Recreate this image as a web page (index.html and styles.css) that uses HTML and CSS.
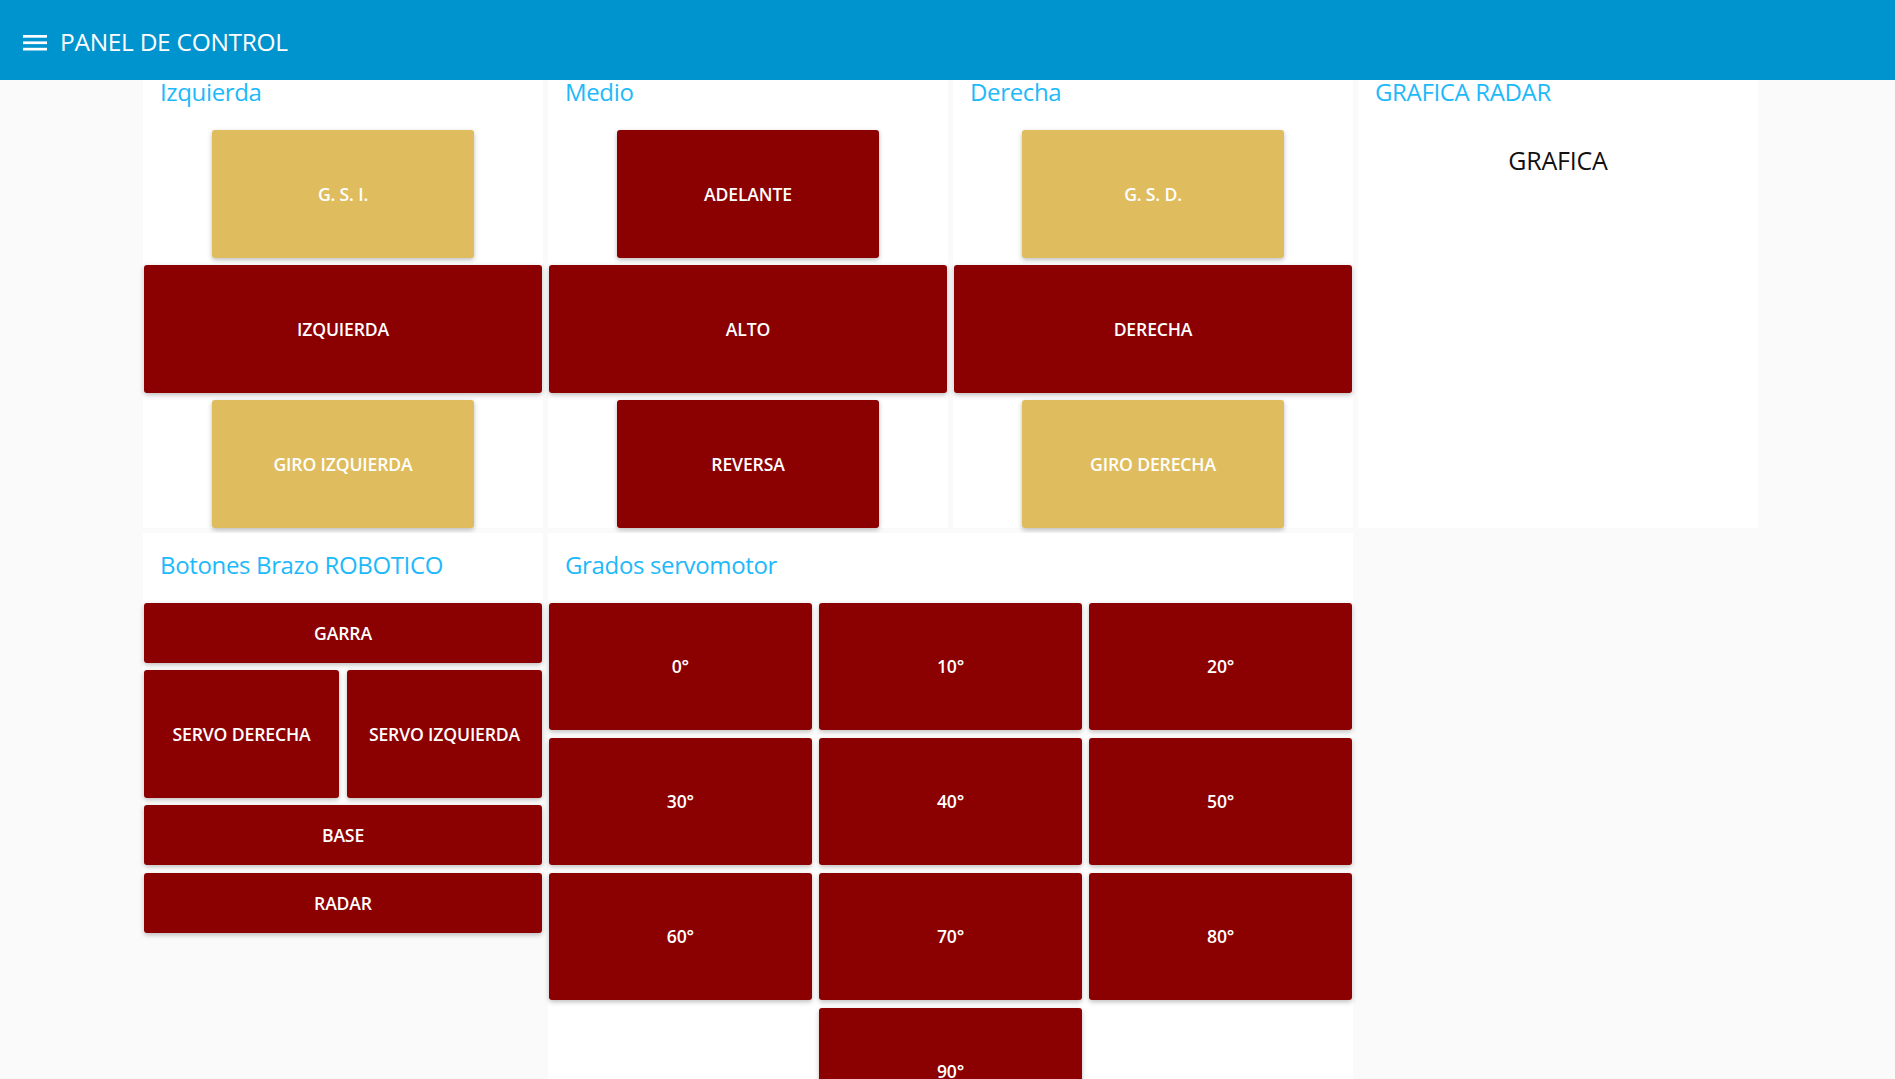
FILE: index.html
```html
<!DOCTYPE html>
<html lang="es">
<head>
<meta charset="utf-8">
<title>PANEL DE CONTROL</title>
<link rel="stylesheet" href="styles.css">
</head>
<body>
<header class="toolbar">
  <svg class="menu-icon" viewBox="0 0 24 16" width="24" height="16" aria-hidden="true">
    <rect x="0" y="0" width="24" height="2.7" fill="#fff"/>
    <rect x="0" y="6.4" width="24" height="2.7" fill="#fff"/>
    <rect x="0" y="12.8" width="24" height="2.7" fill="#fff"/>
  </svg>
  <h1 class="toolbar-title">PANEL DE CONTROL</h1>
</header>

<main class="dashboard">
  <section class="group">
    <h2 class="group-title">Izquierda</h2>
    <div class="stack">
      <button class="btn gold narrow tall">G. S. I.</button>
      <button class="btn red tall">IZQUIERDA</button>
      <button class="btn gold narrow tall">GIRO IZQUIERDA</button>
    </div>
  </section>

  <section class="group">
    <h2 class="group-title">Medio</h2>
    <div class="stack">
      <button class="btn red narrow tall">ADELANTE</button>
      <button class="btn red tall">ALTO</button>
      <button class="btn red narrow tall">REVERSA</button>
    </div>
  </section>

  <section class="group">
    <h2 class="group-title">Derecha</h2>
    <div class="stack">
      <button class="btn gold narrow tall">G. S. D.</button>
      <button class="btn red tall">DERECHA</button>
      <button class="btn gold narrow tall">GIRO DERECHA</button>
    </div>
  </section>

  <section class="group radar">
    <h2 class="group-title">GRAFICA RADAR</h2>
    <p class="radar-text">GRAFICA</p>
  </section>

  <section class="group arm">
    <h2 class="group-title">Botones Brazo ROBOTICO</h2>
    <div class="arm-grid">
      <button class="btn red short span2">GARRA</button>
      <button class="btn red tall">SERVO DERECHA</button>
      <button class="btn red tall">SERVO IZQUIERDA</button>
      <button class="btn red short span2">BASE</button>
      <button class="btn red short span2">RADAR</button>
    </div>
  </section>

  <section class="group degrees">
    <h2 class="group-title">Grados servomotor</h2>
    <div class="deg-grid">
      <button class="btn red deg">0°</button>
      <button class="btn red deg">10°</button>
      <button class="btn red deg">20°</button>
      <button class="btn red deg">30°</button>
      <button class="btn red deg">40°</button>
      <button class="btn red deg">50°</button>
      <button class="btn red deg">60°</button>
      <button class="btn red deg">70°</button>
      <button class="btn red deg">80°</button>
      <button class="btn red deg col2">90°</button>
    </div>
  </section>
</main>
</body>
</html>
```

FILE: styles.css
```css
html, body {
  margin: 0;
  padding: 0;
  height: 100%;
  overflow: hidden;
}

body {
  background: #fafafa;
  font-family: "Open Sans", "Noto Sans", sans-serif;
}

.toolbar {
  position: fixed;
  top: 0;
  left: 0;
  right: 0;
  height: 80px;
  background: #0094ce;
  display: flex;
  align-items: center;
  padding-left: 23px;
  z-index: 10;
  box-sizing: border-box;
}

.menu-icon {
  width: 24px;
  height: 16px;
  margin-top: 6px;
}

.toolbar-title {
  margin: 4px 0 0 13px;
  color: #fff;
  font-weight: 400;
  font-size: 24.5px;
  letter-spacing: -0.3px;
  line-height: 1;
}

.dashboard {
  display: grid;
  grid-template-columns: repeat(4, 400px);
  column-gap: 5px;
  row-gap: 5px;
  align-items: start;
  padding: 60px 0 0 143px;
}

.group {
  background: #fff;
  padding: 0 1px;
  box-sizing: border-box;
}

.group-title {
  margin: 0;
  height: 70px;
  padding: 16px 0 0 16px;
  box-sizing: border-box;
  color: #1db9fa;
  font-weight: 400;
  font-size: 24px;
  letter-spacing: -0.35px;
  line-height: 32px;
}

.stack {
  display: flex;
  flex-direction: column;
  align-items: center;
  gap: 7.5px;
}

.btn {
  border: 0;
  margin: 0;
  padding: 0;
  border-radius: 3px;
  box-shadow: 0 2px 5px rgba(0, 0, 0, 0.26);
  color: #fff;
  font-family: "Open Sans", "Noto Sans", sans-serif;
  font-weight: 600;
  font-size: 17.6px;
  letter-spacing: -0.15px;
  display: flex;
  align-items: center;
  justify-content: center;
  width: 100%;
}

.red { background: #8b0000; }
.gold { background: #dfbd5e; }

.tall { height: 127.5px; }
.short { height: 60px; }
.narrow { width: 262.5px; }

.radar {
  align-self: stretch;
}

.radar-text {
  margin: 0;
  padding-top: 15px;
  text-align: center;
  color: #111;
  font-size: 25px;
  letter-spacing: -0.2px;
  line-height: 30px;
}

.arm-grid {
  display: grid;
  grid-template-columns: 1fr 1fr;
  gap: 7.5px 8px;
}

.span2 { grid-column: span 2; }

.degrees {
  grid-column: span 2;
  height: 600px;
}

.deg-grid {
  display: grid;
  grid-template-columns: repeat(3, 1fr);
  gap: 7.5px;
}

.deg { height: 127.5px; }
.col2 { grid-column: 2; }
```
